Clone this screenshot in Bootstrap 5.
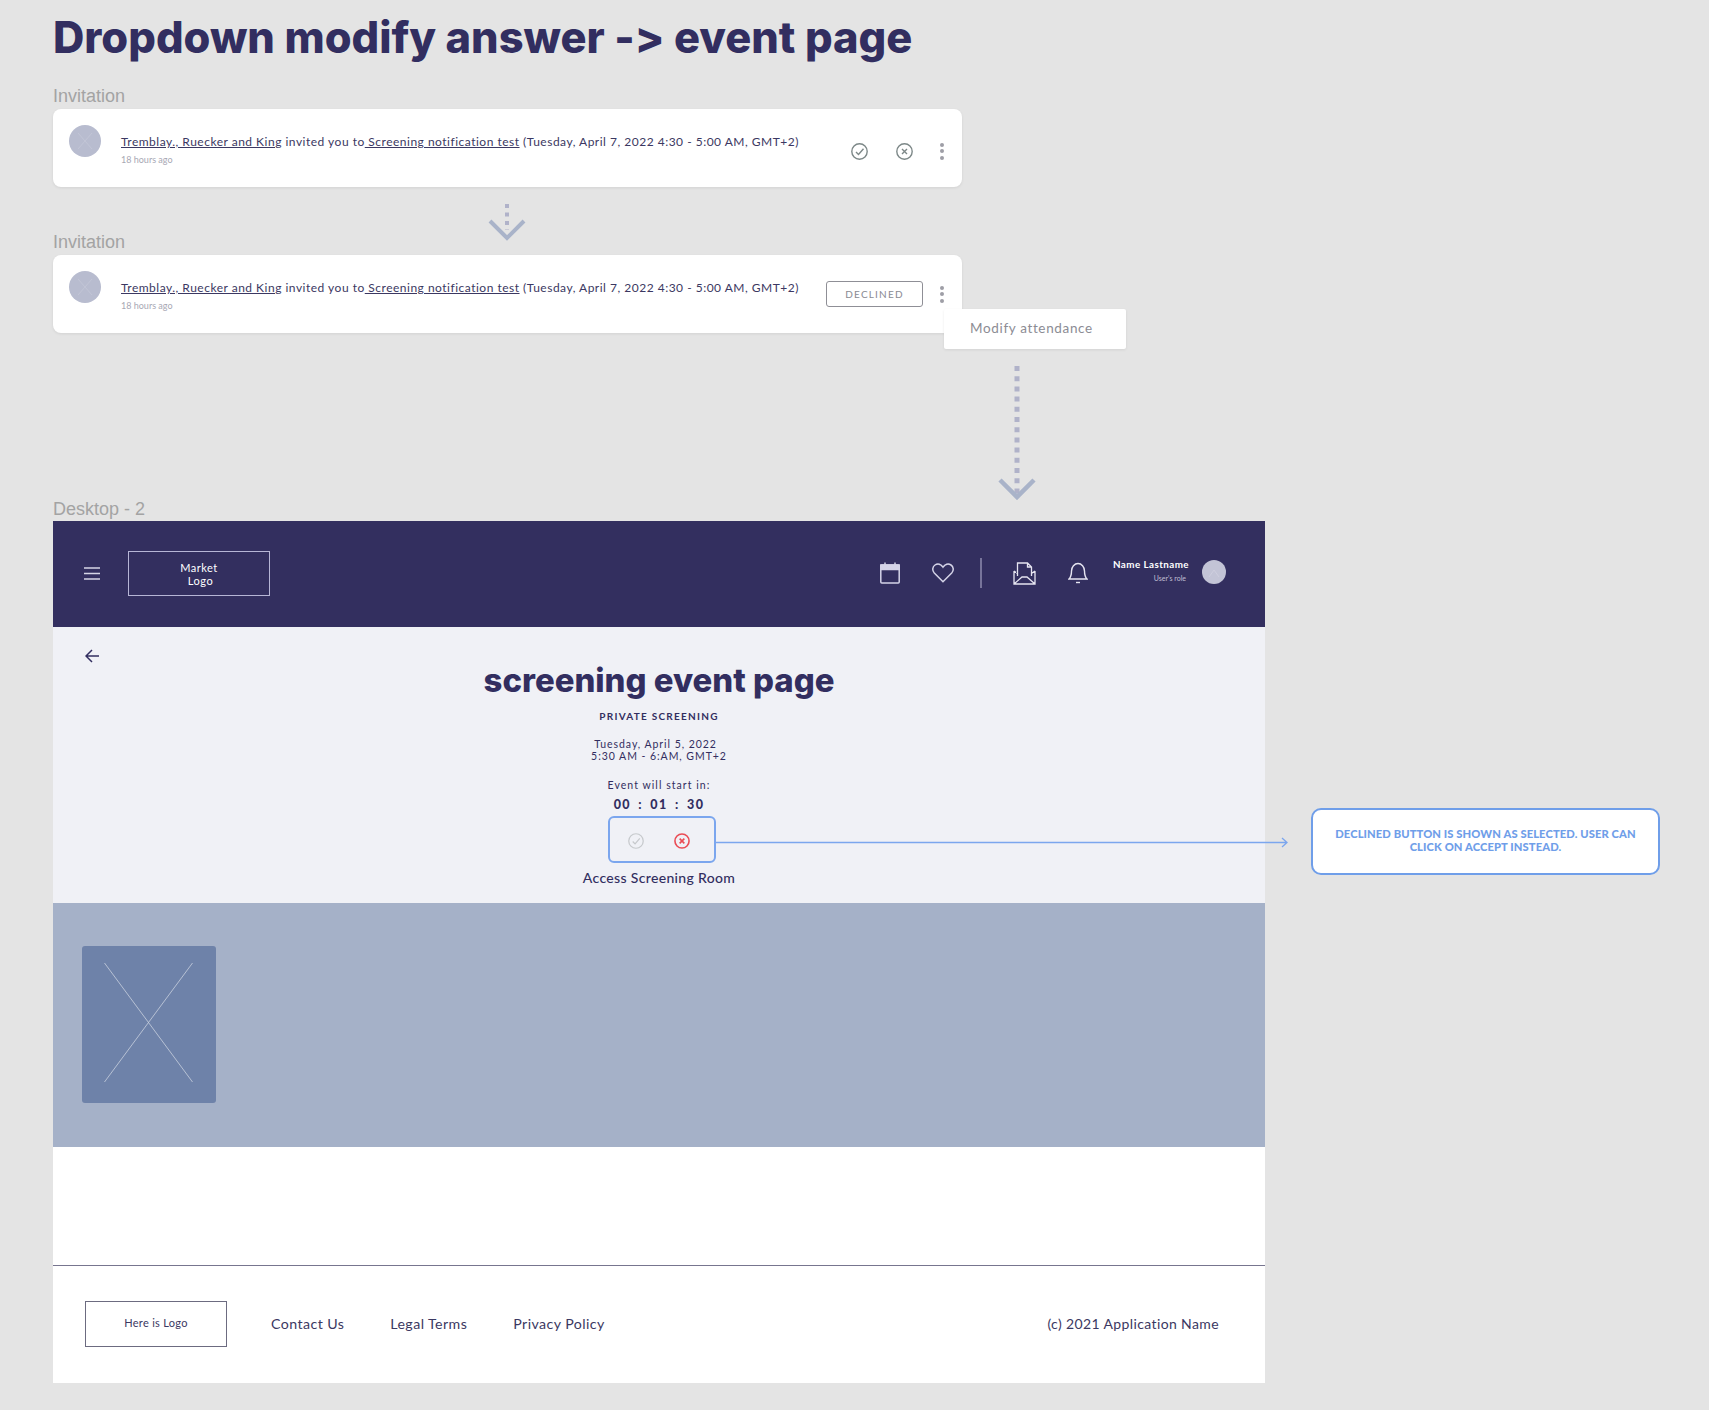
<!DOCTYPE html>
<html lang="en">
<head>
<meta charset="utf-8">
<title>Dropdown modify answer</title>
<link href="https://cdn.jsdelivr.net/npm/bootstrap@5.3.0/dist/css/bootstrap.min.css" rel="stylesheet">
<style>
body{background:#e4e4e4;font-family:"Lato","Liberation Sans",sans-serif;color:#322e60;min-height:1410px;}
.board{padding:15px 0 0 53px;position:relative;width:1709px;}
.board-title{font-family:"Inter",sans-serif;font-weight:800;font-size:43.4px;line-height:44px;margin:0;color:#322e60;font-variant-ligatures:none;font-feature-settings:"calt" 0;}
.lbl{font-family:"Liberation Sans",sans-serif;font-size:18px;line-height:20px;color:#a3a3a3;}
.lbl-a{margin-top:27px;margin-bottom:3px;}
.lbl-b{margin-top:45px;margin-bottom:3px;}
.lbl-c{margin-top:166px;margin-bottom:2px;}
.invite{width:909px;height:78px;border:0;border-radius:8px;box-shadow:0 1px 3px rgba(0,0,0,.08);padding:16px 18px 0 16px;position:relative;}
.pic{width:32px;height:32px;flex:none;}
.inv-body{margin-left:20px;padding-top:9px;}
.inv-text{font-size:12px;line-height:16px;letter-spacing:.5px;color:#3b3862;white-space:nowrap;}
.inv-text a{color:#3b3862;}
.ago{font-size:9px;line-height:12px;color:#a8a8b4;margin-top:4px;}
.acts{margin-left:auto;height:30px;}
.acts-a{margin-top:11px;}
.acts-b{margin-top:8px;}
.dots{width:4px;flex:none;display:flex;flex-direction:column;gap:2.5px;}
.dots i{display:block;width:4px;height:4px;border-radius:50%;background:#9e9ea6;}
.ic-check{margin-right:28px;}
.ic-cross{margin-right:27px;}
.declined-tag{width:97px;height:26px;padding:0;font-size:10px;line-height:20px;letter-spacing:1.2px;color:#8a8a92;border:1px solid #8f8f96;border-radius:3px;margin-right:17px;background:#fff;}
.modify-menu{display:block;position:absolute;left:891px;top:54px;width:182px;height:40px;border:0;border-radius:2px;padding:0 0 0 26px;line-height:38px;font-size:13.5px;letter-spacing:.65px;color:#8c8c94;box-shadow:0 1px 3px rgba(0,0,0,.08);min-width:0;margin:0;z-index:3;}
.flow-arrow{position:absolute;z-index:2;}
.workspace{width:1212px;position:relative;}
.app-head{height:106px;background:#332f5f;padding:0 39px 2px 31px;flex-wrap:nowrap;}
.logo-box{width:142px;height:45px;border:1.5px solid #b7b6d6;color:#fff;font-size:11px;line-height:13.5px;letter-spacing:.5px;padding-top:9px;margin-left:28px;text-align:center;}
.logo-box span{display:block;}
.logo-box .second{padding-left:3px;}
.head-tools{margin-left:auto;}
.split{width:1.5px;height:30px;background:#77749a;margin:0 31.5px 0 26px;}
.who{margin-left:25px;text-align:right;color:#fff;width:75px;margin-top:-5px;}
.who-name{font-size:9.8px;line-height:13px;font-weight:700;letter-spacing:.45px;white-space:nowrap;}
.who-role{font-size:7px;line-height:10px;color:#c0bfd4;margin-top:2px;padding-right:2px;}
.head-pic{width:24px;height:24px;margin-left:14px;margin-top:-2px;}
.hero{height:276px;background:#f0f1f6;padding-top:22px;text-align:center;}
.back{display:block;height:11px;margin-left:32px;text-align:left;line-height:0;}
.hero-title{font-family:"Inter",sans-serif;font-weight:800;font-size:32.9px;line-height:40px;margin:0;color:#322e60;}
.kind{font-size:10px;font-weight:700;line-height:14px;letter-spacing:1.25px;margin-top:9px;}
.when{font-size:10.5px;line-height:11.5px;letter-spacing:.95px;margin-top:16px;}
.when-first{padding-right:7px;}
.starts{font-size:10.5px;line-height:14px;letter-spacing:1.05px;margin-top:16px;}
.timer{font-size:12.5px;font-weight:900;line-height:16px;letter-spacing:1.4px;margin-top:5px;word-spacing:3px;}
.answer-box{width:108px;height:47px;border:2px solid #7ba6ee;border-radius:6px;margin:3px 0 0 555px;padding:2px 0 0 18px;gap:30px;}
.enter{font-size:14px;line-height:18px;font-weight:500;letter-spacing:.33px;margin-top:6px;}
.band{height:244px;background:#a5b1c8;padding:43px 0 0 29px;}
.thumb{width:134px;height:157px;display:block;}
.blank{height:118px;background:#fff;}
.foot{height:118px;background:#fff;border-top:1px solid #77758f;padding:35px 46px 0 32px;color:#3b3862;}
.foot-logo{width:142px;height:46px;border:1.5px solid #6c6b80;font-size:11px;text-align:center;line-height:13px;padding-top:14px;letter-spacing:.3px;flex:none;}
.foot-link{font-size:14.2px;letter-spacing:.42px;line-height:46px;color:#3b3862;text-decoration:none;}
.foot-first{margin-left:44px;}
.foot-next{margin-left:46px;}
.copy{margin-left:auto;font-size:14px;letter-spacing:.38px;line-height:46px;}
.wire{position:absolute;left:663px;top:316px;z-index:2;}
.note{position:absolute;left:1258px;top:287px;width:349px;height:67px;border:2px solid #6f9ee9;border-radius:10px;background:#fff;color:#6f9ee9;font-size:11.2px;font-weight:900;line-height:13px;letter-spacing:.1px;text-align:center;text-transform:uppercase;padding:17px 20px 0;}
</style>
</head>
<body>
<div class="board">
  <h1 class="board-title">Dropdown modify answer -&gt; event page</h1>

  <div class="lbl lbl-a">Invitation</div>
  <div class="card invite d-flex flex-row">
    <svg class="pic" viewBox="0 0 32 32"><circle cx="16" cy="16" r="16" fill="#b8bccf"/><path d="M9 8 23 24M23 8 9 24" stroke="#c6c9d9" stroke-width=".7"/></svg>
    <div class="inv-body">
      <div class="inv-text"><a href="#">Tremblay., Ruecker and King</a> invited you to<a href="#"> Screening notification test</a> (Tuesday, April 7, 2022 4:30 - 5:00 AM, GMT+2)</div>
      <div class="ago">18 hours ago</div>
    </div>
    <div class="acts acts-a d-flex align-items-center">
      <svg class="ic-check" width="17" height="17" viewBox="0 0 17 17" fill="none" stroke="#7d8888" stroke-width="1.4"><circle cx="8.5" cy="8.5" r="7.7"/><path d="M5 9l2.5 2.5L12.5 5.8"/></svg>
      <svg class="ic-cross" width="17" height="17" viewBox="0 0 17 17" fill="none" stroke="#7d8888" stroke-width="1.4"><circle cx="8.5" cy="8.5" r="7.7"/><path d="M6 6l5 5M11 6l-5 5"/></svg>
      <div class="dots"><i></i><i></i><i></i></div>
    </div>
  </div>

  <svg class="flow-arrow" style="left:488px;top:204px" width="38" height="37" viewBox="0 0 38 37" fill="none"><path d="M19 0V26" stroke="#b0b2c9" stroke-width="4" stroke-dasharray="4 4.5"/><path d="M2 17 19 34 36 17" stroke="#a9b3c9" stroke-width="4"/></svg>

  <div class="lbl lbl-b">Invitation</div>
  <div class="card invite d-flex flex-row">
    <svg class="pic" viewBox="0 0 32 32"><circle cx="16" cy="16" r="16" fill="#b8bccf"/><path d="M9 8 23 24M23 8 9 24" stroke="#c6c9d9" stroke-width=".7"/></svg>
    <div class="inv-body">
      <div class="inv-text"><a href="#">Tremblay., Ruecker and King</a> invited you to<a href="#"> Screening notification test</a> (Tuesday, April 7, 2022 4:30 - 5:00 AM, GMT+2)</div>
      <div class="ago">18 hours ago</div>
    </div>
    <div class="acts acts-b d-flex align-items-center">
      <button type="button" class="btn declined-tag">DECLINED</button>
      <div class="dots"><i></i><i></i><i></i></div>
    </div>
    <div class="dropdown-menu modify-menu">Modify attendance</div>
  </div>

  <svg class="flow-arrow" style="left:998px;top:366px" width="38" height="135" viewBox="0 0 38 135" fill="none"><path d="M19 0V128" stroke="#b0b2c9" stroke-width="5" stroke-dasharray="5 5.2"/><path d="M2 114 19 131 36 114" stroke="#a9b3c9" stroke-width="4.5"/></svg>

  <div class="lbl lbl-c">Desktop - 2</div>
  <div class="workspace">
    <nav class="navbar app-head">
      <svg width="16" height="13" viewBox="0 0 16 13" stroke="#d6d5e6" stroke-width="1.4"><path d="M0 1H16M0 6.5H16M0 12H16"/></svg>
      <div class="logo-box"><span>Market</span><span class="second">Logo</span></div>
      <div class="head-tools d-flex align-items-center">
        <svg width="20" height="22" viewBox="0 0 20 22" fill="none" stroke="#d5d4e8" stroke-width="1.5" style="margin-right:32px"><rect x=".8" y="3" width="18.4" height="18" rx="1"/><path d="M.8 3h18.4v4.5H.8z" fill="#d5d4e8"/><path d="M5 .5v3M15 .5v3"/></svg>
        <svg width="22" height="20" viewBox="0 0 22 20" fill="none" stroke="#d5d4e8" stroke-width="1.5"><path d="M11 18.8 2.3 10C-.2 7.300.6 3.600 3 2 5.800.2 9 1.200 11 4.200 13 1.200 16.200.2 19 2c2.400 1.600 3.200 5.300.7 8z"/></svg>
        <div class="split"></div>
        <svg width="23" height="23" viewBox="0 0 23 23" fill="none" stroke="#e6e5f1" stroke-width="1.3" style="margin-right:32px"><path d="M1 9v13h21V9M1 22l8-7h5l8 7M1 9l3.500 2.500M22 9l-3.500 2.500M4.500 14V1h10l4 4v9M14.500 1v4h4"/></svg>
        <svg width="20" height="22" viewBox="0 0 20 22" fill="none" stroke="#e6e5f1" stroke-width="1.4"><path d="M1 17c2-2 2.500-4 2.500-8 0-4 3-7.500 6.500-7.500s6.500 3.500 6.500 7.500c0 4 .5 6 2.500 8z"/><path d="M8 20.500h4"/></svg>
        <div class="who"><div class="who-name">Name Lastname</div><div class="who-role">User's role</div></div>
        <svg class="head-pic" viewBox="0 0 24 24"><circle cx="12" cy="12" r="12" fill="#c3c4d6"/><path d="M7 17 12 10 17 17" stroke="#d0d1df" stroke-width=".8" fill="none"/></svg>
      </div>
    </nav>

    <section class="hero">
      <a class="back" href="#"><svg width="14" height="14" viewBox="0 0 14 14" fill="none" stroke="#322e60" stroke-width="1.5"><path d="M14 7H1M7 1 1 7l6 6"/></svg></a>
      <h2 class="hero-title">screening event page</h2>
      <div class="kind">PRIVATE SCREENING</div>
      <div class="when"><span class="when-first">Tuesday, April 5, 2022</span><br>5:30 AM - 6:AM, GMT+2</div>
      <div class="starts">Event will start in:</div>
      <div class="timer">00 : 01 : 30</div>
      <div class="answer-box d-flex align-items-center">
        <svg width="16" height="16" viewBox="0 0 17 17" fill="none" stroke="#c6c9cc" stroke-width="1.3"><circle cx="8.500" cy="8.500" r="7.700"/><path d="M5 9l2.500 2.500L12.500 5.800"/></svg>
        <svg width="16" height="16" viewBox="0 0 17 17" fill="none" stroke="#ea4c55" stroke-width="1.700"><circle cx="8.500" cy="8.500" r="7.500"/><path d="M6 6l5 5M11 6l-5 5"/></svg>
      </div>
      <div class="enter">Access Screening Room</div>
    </section>

    <section class="band">
      <svg class="thumb" viewBox="0 0 134 157"><rect width="134" height="157" rx="3" fill="#6e82a9"/><path d="M22.500 17 110.500 136M110.500 17 22.500 136" stroke="#c9d0de" stroke-width=".8"/></svg>
    </section>

    <div class="blank"></div>

    <footer class="foot d-flex align-items-start">
      <div class="foot-logo">Here is Logo</div>
      <a class="foot-link foot-first" href="#">Contact Us</a>
      <a class="foot-link foot-next" href="#">Legal Terms</a>
      <a class="foot-link foot-next" href="#">Privacy Policy</a>
      <div class="copy">(c) 2021 Application Name</div>
    </footer>

    <svg class="wire" width="572" height="11" viewBox="0 0 572 11" fill="none" stroke="#7ba6ee" stroke-width="1.300"><path d="M0 5.500H571M566 1l5 4.500-5 4.500"/></svg>
    <div class="note">Declined button is shown as selected. User can click on accept instead.</div>
  </div>
</div>
<script src="https://cdn.jsdelivr.net/npm/bootstrap@5.3.0/dist/js/bootstrap.bundle.min.js"></script>
</body>
</html>
